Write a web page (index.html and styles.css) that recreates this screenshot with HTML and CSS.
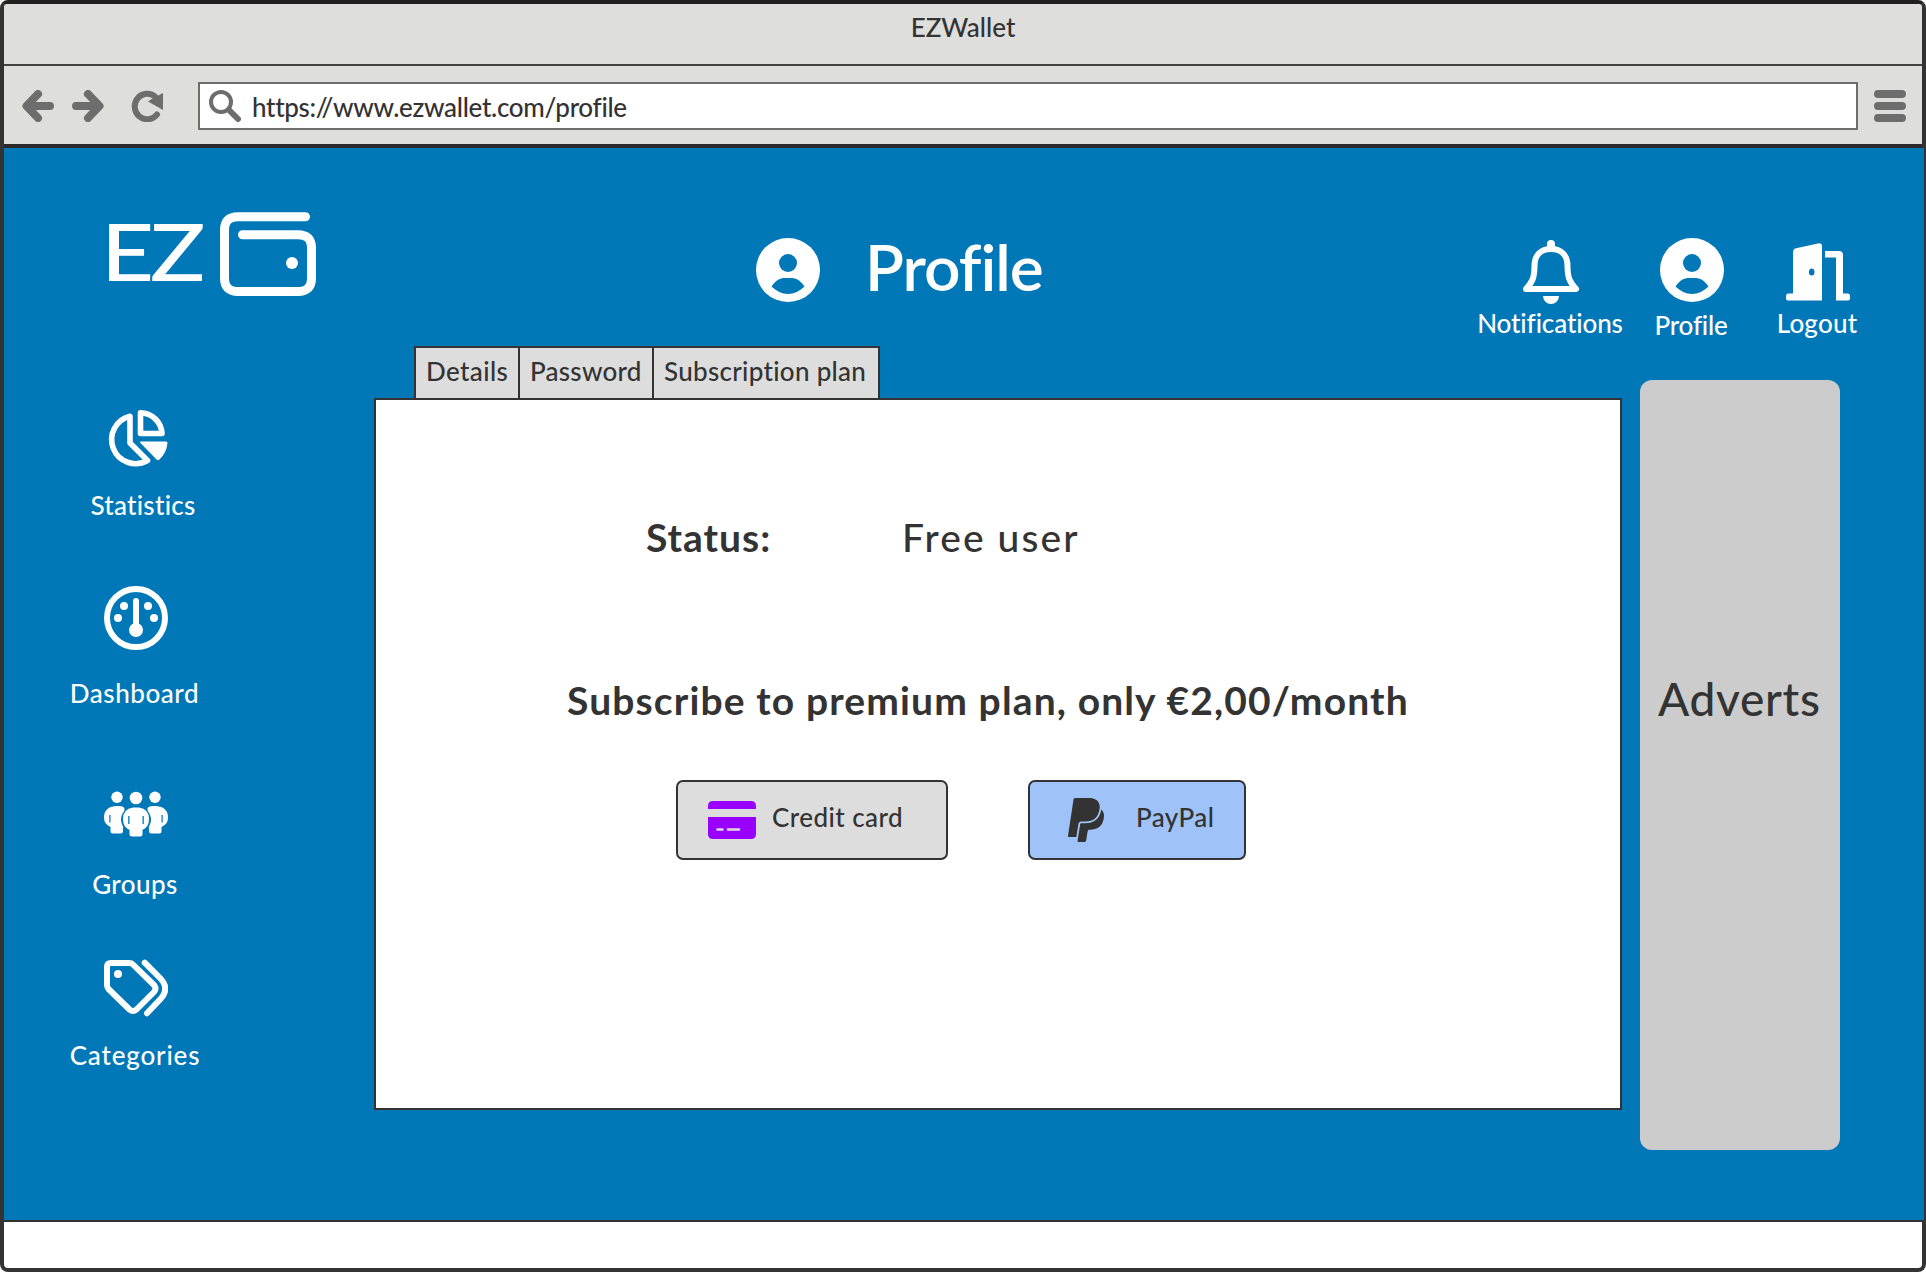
FILE: index.html
```
<!DOCTYPE html>
<html lang="en">
<head>
<meta charset="utf-8">
<title>EZWallet</title>
<link rel="stylesheet" href="styles.css">
</head>
<body>
<div class="window">
  <div class="titlebar">EZWallet</div>
  <div class="toolbar">
    <svg class="tool" viewBox="0 0 32 32"><path d="M16 4 4.500 16 16 28M5 16H28"/></svg>
    <svg class="tool forward" viewBox="0 0 32 32"><path d="M16 4 27.500 16 16 28M27 16H4"/></svg>
    <svg class="tool reload" viewBox="0 0 32 32"><path class="ring" d="M24 6.500A12.500 12.800 0 1 0 26 24.500"/><path class="solid" d="M32 3V20L17 11.500 20.500 9z"/></svg>
    <div class="address">
      <svg class="tool" viewBox="0 0 32 32"><circle class="lens" cx="12" cy="12" r="10"/><path class="handle" d="M20 20 29 29"/></svg>
      <span class="url">https://www.ezwallet.com/profile</span>
    </div>
    <svg class="tool menu" viewBox="0 0 32 32"><path d="M4 4H28M4 16H28M4 28H28"/></svg>
  </div>

  <div class="page">
    <header class="header">
      <div class="logo">
        <span class="logo-text">EZ</span>
        <svg class="wallet" viewBox="0 0 96 84"><path d="M85.500 4.700H18Q4.500 4.700 4.500 18V66Q4.500 79.500 18 79.500H78Q91.500 79.500 91.500 66V36Q91.500 22.700 78 22.700H22.500"/><circle cx="72" cy="51" r="6"/></svg>
      </div>
      <div class="heading">
        <svg class="icon" viewBox="0 0 64 64"><circle class="fill" cx="32" cy="32" r="32"/><circle class="cut" cx="32" cy="25" r="9"/><path class="cut" d="M15.500 48.500C20 42 24 40 29 40H35C40 40 44 42 48.500 48.500 44 53 38 56 32 56S20 53 15.500 48.500z"/></svg>
        <h1>Profile</h1>
      </div>
      <nav class="nav">
        <a class="nav-item notifications">
          <svg class="icon" viewBox="0 0 64 66"><path class="line" d="M7 51C12 45 15.500 42 15.500 28 15.500 17 22 11 32 11S48.500 17 48.500 28C48.500 42 52 45 57 51z"/><path class="fill" d="M28 10V6a4 4 0 0 1 8 0V10zM24 58H40a8 8 0 0 1-16 0z"/></svg>
          <span>Notifications</span>
        </a>
        <a class="nav-item profile">
          <svg class="icon" viewBox="0 0 64 66"><circle class="fill" cx="32" cy="32" r="32"/><circle class="cut" cx="32" cy="25" r="9"/><path class="cut" d="M15.500 48.500C20 42 24 40 29 40H35C40 40 44 42 48.500 48.500 44 53 38 56 32 56S20 53 15.500 48.500z"/></svg>
          <span>Profile</span>
        </a>
        <a class="nav-item logout">
          <svg class="icon" viewBox="0 0 64 66"><path class="fill" d="M0 58Q0 55.500 2 55.500H7V14.500Q7 11.200 10 10.300L32 5.500Q36 4.800 36 8V62.500H2Q0 62.500 0 60.500zM39 13H53Q57 13 57 17V55.500H62Q64 55.500 64 58V60.500Q64 62.500 62 62.500H50V19.500H39z"/><ellipse class="cut" cx="25.700" cy="34" rx="2.800" ry="3.600"/></svg>
          <span>Logout</span>
        </a>
      </nav>
    </header>

    <div class="body">
      <aside class="side">
        <a class="side-item statistics">
          <svg class="icon" viewBox="0 0 64 64"><path class="line" d="M26 8.300V35L43.500 52.500A24 24 0 1 1 26 8.300z"/><path class="line" d="M36.500 4.700V25.500H58A22 22 0 0 0 36.500 4.700z"/><path class="fill" d="M36.500 33.500H62Q63.500 33.500 63.500 35 62.500 45 55.500 51.500 54 53 52.500 51.500L36 34.500z"/></svg>
          <span>Statistics</span>
        </a>
        <a class="side-item dashboard">
          <svg class="icon" viewBox="0 0 64 64"><circle class="line gauge" cx="32" cy="32" r="29"/><path class="line gauge" d="M32 15V44"/><circle class="fill" cx="32" cy="44" r="7"/><circle class="fill" cx="20" cy="20" r="4"/><circle class="fill" cx="44" cy="20" r="4"/><circle class="fill" cx="14" cy="32" r="4"/><circle class="fill" cx="50" cy="32" r="4"/></svg>
          <span>Dashboard</span>
        </a>
        <a class="side-item groups">
          <svg class="icon" viewBox="0 0 64 64">
            <circle class="fill" cx="13" cy="15.300" r="5.700"/><circle class="fill" cx="51" cy="15.300" r="5.700"/><circle class="fill" cx="32" cy="16" r="6.300"/>
            <path class="fill" d="M12 24H15Q19 24 20.500 26L19 47V49Q19 51.500 16.500 51.500H9Q6.500 51.500 6.500 49V45Q0 42.500 0 35.500 0 25 12 24z"/>
            <path class="fill" d="M52 24H49Q45 24 43.500 26L45 47V49Q45 51.500 47.500 51.500H55Q57.500 51.500 57.500 49V45Q64 42.500 64 35.500 64 25 52 24z"/>
            <path class="cut" d="M5.300 33H6.500V40.500H5.300zM57.500 33H58.700V40.500H57.500z"/>
            <ellipse class="cut" cx="32" cy="37.500" rx="15" ry="13.500"/>
            <path class="fill" d="M29 25.500H35Q45 27 45 37 45 45 38.500 48V52Q38.500 54.500 36 54.500H28Q25.500 54.500 25.500 52V48Q19 45 19 37 19 27 29 25.500z"/>
            <path class="cut" d="M24.200 34H25.500V42H24.200zM38.500 34H39.800V42H38.500z"/>
          </svg>
          <span>Groups</span>
        </a>
        <a class="side-item categories">
          <svg class="icon" viewBox="0 0 64 64"><path class="line gauge" d="M3 11Q3 7 7 7H25Q27.500 7 29 8.500L50 29Q53 32.700 50 36L32.500 53.500Q29 56.500 25.500 53.500L4.500 33Q3 31.500 3 29zM40.700 6.700 56.500 22.500Q66 32.700 56.500 43L43 57.300"/><circle class="fill" cx="14" cy="18" r="4"/></svg>
          <span>Categories</span>
        </a>
      </aside>

      <main class="main">
        <div class="tabs">
          <div class="tab details">Details</div>
          <div class="tab password">Password</div>
          <div class="tab plan">Subscription plan</div>
        </div>
        <section class="panel">
          <div class="status"><strong>Status:</strong><span>Free user</span></div>
          <h2>Subscribe to premium plan, only €2,00/month</h2>
          <div class="buttons">
            <button class="btn card">
              <svg viewBox="0 0 48 38"><path fill="#9900ff" d="M5 0H43Q48 0 48 5V8H0V5Q0 0 5 0zM0 16H48V33Q48 38 43 38H5Q0 38 0 33z"/><path stroke="#ddd" stroke-width="2.600" stroke-linecap="round" d="M9.500 28.500H14.500M20 28.500H31"/></svg>
              <span>Credit card</span>
            </button>
            <button class="btn paypal">
              <svg viewBox="0 30 384 453" preserveAspectRatio="none"><path fill="#333" d="M111.400 295.900c-3.500 19.200-17.400 108.700-21.500 134-.3 1.800-1 2.500-3 2.500H12.300c-7.600 0-13.100-6.600-12.100-13.900L58.800 46.600c1.500-9.600 10.100-16.900 20-16.900 152.300 0 165.100-3.700 204 11.400 60.100 23.300 65.600 79.500 44 140.300-21.500 62.600-72.500 89.500-140.100 90.300-43.400.7-69.500-7-75.300 24.200zM357.100 152c-1.800-1.300-2.500-1.800-3 1.300-2 11.400-5.100 22.500-8.800 33.600-39.900 113.800-150.500 103.900-204.500 103.900-6.100 0-10.100 3.300-10.900 9.400-22.600 140.400-27.100 169.700-27.100 169.700-1 7.100 3.500 12.900 10.600 12.900h63.500c8.600 0 15.700-6.300 17.400-14.900.7-5.400-1.100 6.100 14.400-91.300 4.600-22 14.300-19.700 29.300-19.700 71 0 126.400-28.800 142.900-112.300 6.500-34.800 4.600-71.400-23.800-92.600z"/></svg>
              <span>PayPal</span>
            </button>
          </div>
        </section>
      </main>

      <aside class="adverts">Adverts</aside>
    </div>
  </div>
  <div class="footer"></div>
</div>
</body>
</html>
```
FILE: styles.css
```
* { box-sizing: border-box; }
body {
  margin: 0;
  background: #fff;
  color: #333;
  font: 500 26px/32px Lato, sans-serif;
  font-variant-ligatures: none;
  white-space: nowrap;
}
svg { display: block; flex: none; }
h1, h2 { margin: 0; }

.window {
  width: 1926px;
  height: 1272px;
  display: flex;
  flex-direction: column;
  border: 4px solid #333;
  border-top-color: #231f20;
  border-radius: 8px;
}

/* Browser chrome */
.titlebar {
  height: 62px;
  padding-top: 7px;
  border-bottom: 2px solid #444;
  border-radius: 4px 4px 0 0;
  background: #dededd;
  text-align: center;
}
.toolbar {
  height: 82px;
  display: flex;
  align-items: center;
  padding: 2px 16px 0 18px;
  border-bottom: 4px solid #2b2829;
  background: #dededd;
}
.tool {
  width: 32px;
  height: 32px;
  fill: none;
  stroke: #6d6d6d;
  stroke-width: 8;
  stroke-linecap: round;
  stroke-linejoin: round;
}
.tool .solid { fill: #6d6d6d; stroke: none; }
.tool .ring { stroke-width: 6; }
.tool .lens { stroke-width: 4; }
.tool .handle { stroke-width: 6; }
.forward { margin-left: 18px; }
.reload { margin: 0 35px 0 27px; }
.address {
  flex: 1;
  height: 48px;
  display: flex;
  align-items: center;
  gap: 11px;
  padding-left: 9px;
  border: 2px solid #6d6d6d;
  background: #fff;
}
.url { letter-spacing: -.3px; padding-top: 1px; }
.menu { margin-left: 16px; }

/* Page */
.page {
  height: 1072px;
  margin-right: -2px;
  background: #0078b8;
}
.icon { width: 64px; }
.fill { fill: #fff; }
.cut { fill: #0078b8; }
.line { fill: none; stroke: #fff; stroke-width: 5.6; stroke-linejoin: round; stroke-linecap: round; }
.notifications .line, .gauge { stroke-width: 6; }

.header {
  height: 198px;
  display: flex;
  color: #fff;
}
.logo { display: flex; padding: 54px 0 0 97px; }
.logo-text {
  width: 119px;
  font-size: 80px;
  font-weight: 500;
  line-height: 96px;
  letter-spacing: -3.500px;
  transform: scaleX(1.15);
  transform-origin: 0 0;
}
.wallet { width: 96px; height: 84px; margin-top: 10px; fill: none; stroke: #fff; stroke-width: 9; stroke-linecap: round; }
.wallet circle { fill: #fff; stroke: none; }
.heading { display: flex; gap: 45px; margin-left: 440px; padding-top: 79px; }
.heading .icon { height: 64px; margin-top: 11px; }
h1 { padding-top: 2px; font-size: 64px; font-weight: 600; line-height: 76px; letter-spacing: -1px; }

.nav { display: flex; margin: 90px 67px 0 auto; font-weight: 500; }
.nav-item { display: flex; flex-direction: column; align-items: center; }
.nav-item .icon { height: 66px; }
.nav-item span { margin-top: 3px; }
.notifications { width: 146px; letter-spacing: -.1px; }
.notifications .icon { margin-left: 1px; }
.profile { width: 72px; margin: 0 50px 0 32px; letter-spacing: -.2px; }
.profile .icon { margin-left: 1px; }
.profile span { margin-top: 5px; }
.logout { width: 80px; letter-spacing: .2px; }
.logout .icon { margin-left: 2px; }

.body { display: flex; align-items: flex-start; }
.side { width: 370px; padding-right: 106px; color: #fff; font-weight: 500; }
.side-item { display: flex; flex-direction: column; align-items: center; }
.side-item .icon { height: 64px; }
.statistics { padding-top: 62px; letter-spacing: .28px; }
.statistics span { margin-top: 17px; padding-left: 14px; }
.dashboard { padding-top: 65px; letter-spacing: .55px; }
.dashboard span { margin-top: 27px; padding-right: 3px; }
.groups { padding-top: 73px; letter-spacing: .45px; }
.groups span { margin-top: 22px; padding-right: 2px; }
.categories { padding-top: 56px; letter-spacing: .83px; }
.categories span { margin-top: 19px; padding-right: 2px; }

.main { width: 1248px; }
.tabs { display: flex; margin-left: 40px; font-weight: 500; }
.tab {
  height: 52px;
  padding: 7px 0 0 10px;
  border: solid #333;
  border-width: 2px 0 0 2px;
  background: #ddd;
}
.details { width: 104px; letter-spacing: .4px; }
.password { width: 134px; letter-spacing: .25px; }
.plan { width: 228px; border-right-width: 2px; letter-spacing: .3px; }
.panel {
  height: 712px;
  padding-top: 113px;
  border: 2px solid #333;
  background: #fff;
  font-size: 39px;
  line-height: 46px;
}
.status { display: flex; padding: 1px 0 0 270px; letter-spacing: 2.1px; }
.status strong { width: 256px; letter-spacing: 1px; }
h2 {
  margin: 117px 0 57px 191px;
  font-size: 39px;
  line-height: 46px;
  letter-spacing: 1.13px;
}
.buttons { display: flex; gap: 80px; padding-left: 300px; }
.btn {
  height: 80px;
  display: flex;
  align-items: center;
  padding: 0 0 0 30px;
  border: 2px solid #333;
  border-radius: 7px;
  background: #ddd;
  color: #333;
  font: 500 26px/32px Lato, sans-serif;
  letter-spacing: .45px;
}
.btn span { padding-bottom: 6px; }
.card { width: 272px; gap: 16px; }
.card svg { width: 48px; height: 38px; }
.paypal { width: 218px; gap: 32px; padding-left: 38px; background: #9fc3f8; }
.paypal svg { width: 36px; height: 44px; }

.adverts {
  width: 200px;
  height: 770px;
  margin: 34px 0 0 18px;
  padding: 291px 0 0 18px;
  border-radius: 12px;
  background: #ccc;
  font-size: 46px;
  line-height: 56px;
  letter-spacing: .7px;
}

.footer { flex: 1; border-top: 2px solid #333; }
```
